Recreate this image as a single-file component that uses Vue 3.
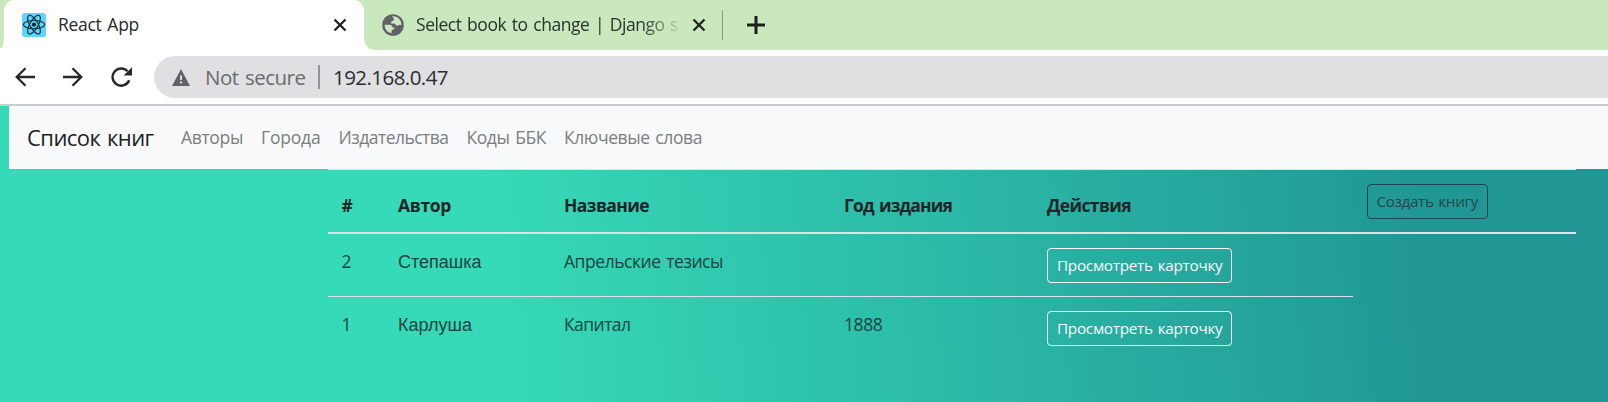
<script setup>
const links = [
  { text: 'Авторы', width: 62 },
  { text: 'Города', width: 59.5 },
  { text: 'Издательства', width: 110 },
  { text: 'Коды ББК', width: 79.5 },
  { text: 'Ключевые слова', width: 138 },
]

const headers = [
  { text: '#', width: 11 },
  { text: 'Автор', width: 53 },
  { text: 'Название', width: 85 },
  { text: 'Год издания', width: 108 },
  { text: 'Действия', width: 84 },
]

const books = [
  { id: 2, author: 'Степашка', authorWidth: 83.5, title: 'Апрельские тезисы', titleWidth: 159, year: '' },
  { id: 1, author: 'Карлуша', authorWidth: 74, title: 'Капитал', titleWidth: 66.5, year: '1888' },
]

// Tracks a label so that its advance width equals the given number of pixels.
const vFit = {
  mounted(el, { value }) {
    el.style.display = 'inline-block'
    const natural = el.getBoundingClientRect().width
    el.style.letterSpacing = `${(value - natural) / el.textContent.length}px`
  },
}
</script>

<template>
  <div class="window">
    <header class="tabs">
      <div class="edge"></div>
      <div class="tab active">
        <svg class="favicon" viewBox="0 0 24 24">
          <rect width="24" height="24" rx="3" fill="#61d4fa" />
          <g fill="none" stroke="#17343e" stroke-width="1.2">
            <ellipse cx="12" cy="11.6" rx="10.6" ry="4.1" />
            <ellipse cx="12" cy="11.6" rx="10.6" ry="4.1" transform="rotate(60 12 11.6)" />
            <ellipse cx="12" cy="11.6" rx="10.6" ry="4.1" transform="rotate(120 12 11.6)" />
          </g>
          <circle cx="12" cy="11.6" r="2.1" fill="#10262e" />
        </svg>
        <span class="title"><span v-fit="81">React App</span></span>
        <svg class="close" viewBox="0 0 14 14"><path d="M1.5 1.5 12.5 12.5M12.5 1.5 1.5 12.5" /></svg>
      </div>
      <div class="rest">
        <svg class="globe" viewBox="0 0 22 22">
          <circle cx="11" cy="11" r="10.8" fill="#5f6368" />
          <path fill="#cae8bd" d="M10.2 2.5C12 2 15 2.7 16.7 4.6C18.6 6.4 19.5 8.6 19.3 11.2C18.5 10.5 17.4 10.4 16.4 11.3C15 12.4 13.4 11.5 13.3 9.8L9.2 9.6C8.6 8.2 9.2 7.1 10.9 6.9C11.8 6.8 11.2 5.6 12.3 5.1C12.3 4 10.6 3.9 10.2 2.5ZM2.7 10.7L7.7 10.8C9.6 11 10.3 12 10.4 13.4L12.6 13.6C12.6 15.2 11.4 16 9.8 16.1L9.5 19.2C5.5 18.5 2.4 15 2.7 10.7Z" />
        </svg>
        <span class="title fade"><span v-fit="262">Select book to change | Django s</span></span>
        <svg class="close" viewBox="0 0 14 14"><path d="M1.5 1.5 12.5 12.5M12.5 1.5 1.5 12.5" /></svg>
        <i class="divider"></i>
        <svg class="plus" viewBox="0 0 18 18"><path d="M9 0V18M0 9H18" /></svg>
      </div>
    </header>

    <div class="toolbar">
      <svg class="nav-icon" viewBox="0 0 20 20"><path d="M20 10H2M10.5 1.2 1.7 10 10.5 18.8" /></svg>
      <svg class="nav-icon" viewBox="0 0 20 20"><path d="M0 10H18M9.5 1.2 18.3 10 9.5 18.8" /></svg>
      <svg class="reload" viewBox="0 0 22 20">
        <path d="M18.2 13.2A8.6 8.6 0 1 1 16.5 4.2" />
        <path class="head" d="M21 .2V8.6H12.6Z" />
      </svg>
      <div class="address">
        <svg class="warning" viewBox="0 0 18 17">
          <path fill="#5f6368" d="M9 0 18 17H0Z" />
          <path fill="#e0e0e2" d="M8 6.4h2v4.6H8ZM8 12.4h2v2H8Z" />
        </svg>
        <span class="insecure"><span v-fit="100.5">Not secure</span></span>
        <i class="bar"></i>
        <span class="url"><span v-fit="115">192.168.0.47</span></span>
      </div>
    </div>

    <main class="page">
      <nav class="navbar">
        <a class="brand"><span v-fit="126.5">Список книг</span></a>
        <a v-for="l in links" :key="l.text" class="link"><span v-fit="l.width">{{ l.text }}</span></a>
      </nav>
      <div class="grid head-row">
        <div v-for="h in headers" :key="h.text" class="cell"><b v-fit="h.width">{{ h.text }}</b></div>
        <div class="cell"><button class="btn dark"><span v-fit="101.5">Создать книгу</span></button></div>
      </div>
      <div v-for="b in books" :key="b.id" class="grid row">
        <div class="cell"><span v-fit="10">{{ b.id }}</span></div>
        <div class="cell author"><span v-fit="b.authorWidth">{{ b.author }}</span></div>
        <div class="cell"><span v-fit="b.titleWidth">{{ b.title }}</span></div>
        <div class="cell"><span v-if="b.year" v-fit="38.5">{{ b.year }}</span></div>
        <div class="cell"><button class="btn light"><span v-fit="165.5">Просмотреть карточку</span></button></div>
      </div>
    </main>
  </div>
</template>

<style>
body { margin: 0; overflow: hidden; }
</style>

<style scoped>
* { box-sizing: border-box; }
.window { width: 1608px; height: 402px; display: flex; flex-direction: column; overflow: hidden; font: 17.5px/27px "Open Sans", "Noto Sans", sans-serif; word-spacing: 1.5px; color: #212529; white-space: nowrap; background: #fff; }
svg { display: block; flex: none; }
.tabs { height: 50px; display: flex; flex: none; }
.edge { width: 4px; height: 48px; background: #cae8bd; border-bottom-right-radius: 4px 9px; }
.active { width: 360px; display: flex; align-items: center; padding: 0 17px 0 18px; background: linear-gradient(#cae8bd 0 12px, #fff 12px); position: relative; isolation: isolate; }
.active::before { content: ""; position: absolute; inset: 0; z-index: -1; background: #fff; border-radius: 11px 11px 0 0; }
.favicon { width: 24px; height: 24px; }
.title { margin: 0 0 2px 12px; flex: 1; font-size: 17.5px; color: #26292c; overflow: hidden; }
.close { width: 14px; height: 14px; stroke: #1f2123; stroke-width: 2.3; fill: none; }
.rest { flex: 1; display: flex; align-items: center; padding-left: 18px; background: #cae8bd; border-bottom-left-radius: 11px; }
.globe { width: 22px; height: 22px; }
.fade { flex: none; width: 264px; color: #26342c; -webkit-mask-image: linear-gradient(90deg, #000 225px, transparent 268px); mask-image: linear-gradient(90deg, #000 225px, transparent 268px); }
.rest .close { margin-left: 12px; }
.divider { width: 1px; height: 30px; background: #899d80; margin-left: 16px; }
.plus { width: 18px; height: 18px; margin-left: 24px; stroke: #1b211a; stroke-width: 3; }
.toolbar { height: 56px; flex: none; display: flex; align-items: center; border-bottom: 2px solid #ccc; padding-left: 15px; }
.nav-icon { width: 20px; height: 20px; margin-right: 28px; fill: none; stroke: #26282b; stroke-width: 2.3; }
.reload { width: 22px; height: 20px; fill: none; stroke: #26282b; stroke-width: 2.4; }
.reload .head { fill: #26282b; stroke: none; }
.address { flex: 1; height: 42px; margin-left: 21px; padding-left: 18px; display: flex; align-items: center; border-radius: 21px 0 0 21px; background: #e0e0e2; font-size: 20.5px; }
.warning { width: 18px; height: 17px; }
.insecure { margin-left: 15px; color: #696b6f; }
.bar { width: 2px; height: 24px; margin-left: 12px; background: #929497; }
.url { margin-left: 13.5px; color: #2b2d30; }
.page { flex: 1; background: linear-gradient(85deg, #36dab8 30.5%, #219795 88%); }
.navbar { height: 63px; margin-left: 9px; padding: 0 0 1px 18px; display: flex; align-items: center; gap: 18px; background: #f8f9fa; color: #7c7d7e; }
.brand { font-size: 22px; line-height: 34px; color: #1d1e1f; margin: 0 9.5px 1px 0; }
.grid { display: grid; grid-template-columns: 56.5px 166px 280px 203px 319.5px 223px; margin-left: 328px; width: 1248px; }
.cell { padding: 13px 13.5px 0; border-top: 1px solid #dee2e6; height: 63px; }
.head-row .cell { height: 65px; padding-top: 14px; border-bottom: 2px solid #dee2e6; }
.head-row b { margin-top: 8px; }
.row { width: 1025px; grid-template-columns: 56.5px 166px 280px 203px 319.5px; color: #1d4541; }
.row .cell { padding-top: 14px; }
.head-row + .row .cell { height: 62px; padding-top: 13px; border-top-color: transparent; }
.author { font-family: "Liberation Sans", Arial, sans-serif; font-size: 18px; line-height: 29px; }
.btn { display: flex; align-items: center; height: 35px; padding: 0 9px 2px; border: 1px solid; border-radius: 4px; background: none; font: 15.3px/24px "Open Sans", sans-serif; word-spacing: 1.2px; white-space: nowrap; }
.dark { width: 121px; border-color: #214449; color: #24474b; }
.light { width: 185px; border-color: #f8f9fa; color: #f8f9fa; }
</style>
